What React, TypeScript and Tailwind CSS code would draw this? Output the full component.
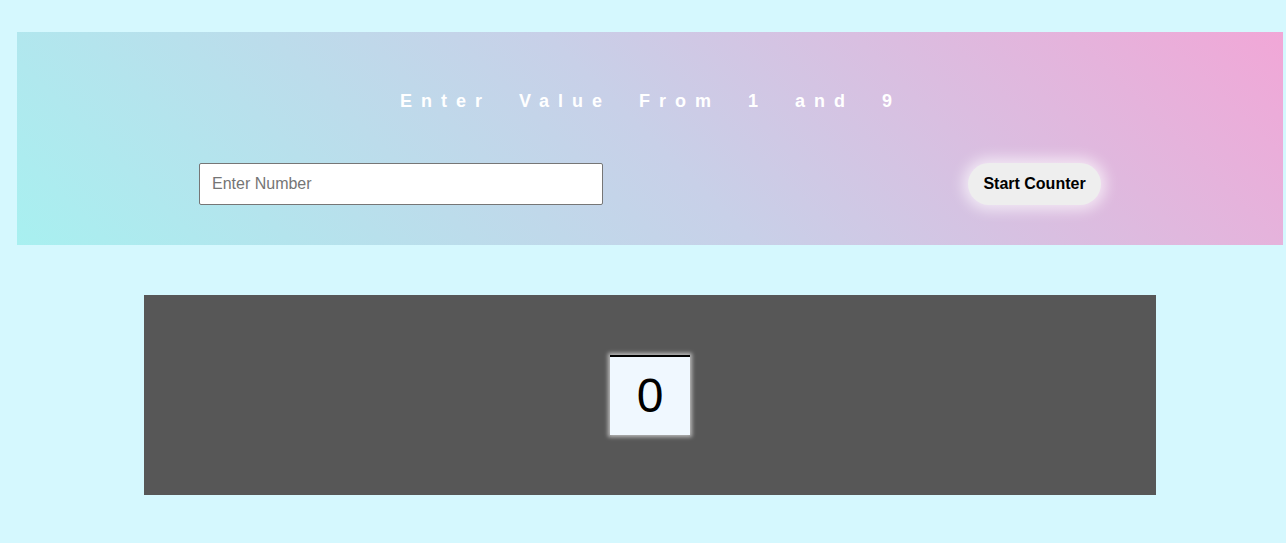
export default function App() {
  return (
    <div className="min-h-[543px] w-full bg-[#d5f8fe] pt-[32px] pb-[48px] font-['Liberation_Sans',Arial,sans-serif]">
      <div className="ml-[17px] w-[1266px] h-[213px] bg-[linear-gradient(45deg,#a8f0f0,#c8d0e8_50%,#f1a7d7)] flex flex-col">
        <h1 className="mt-[59px] text-center text-white font-bold text-[18px] leading-[20px] tracking-[9px] [word-spacing:14px] pl-[1px]">
          Enter Value From 1 and 9
        </h1>
        <div className="mt-[52px] flex items-center">
          <input
            type="text"
            placeholder="Enter Number"
            className="ml-[182px] w-[404px] h-[42px] bg-white border border-[#767676] rounded-[2px] px-[12px] text-[16px] text-black placeholder:text-[#757575] outline-none"
          />
          <button className="ml-[365px] w-[133px] h-[42px] rounded-full bg-[#eeeeee] text-black font-bold text-[16px] shadow-[0_0_14px_5px_rgba(255,255,255,0.65)]">
            Start Counter
          </button>
        </div>
      </div>
      <div className="mt-[50px] ml-[144px] w-[1012px] h-[200px] bg-[#575757] flex justify-center items-center">
        <div className="w-[80px] h-[80px] bg-[#f0f8ff] border-t-2 border-black shadow-[0_0_4px_2px_rgba(255,255,255,0.6)] flex items-center justify-center text-[48px] text-black font-['Liberation_Sans',Arial,sans-serif]">
          0
        </div>
      </div>
    </div>
  );
}
